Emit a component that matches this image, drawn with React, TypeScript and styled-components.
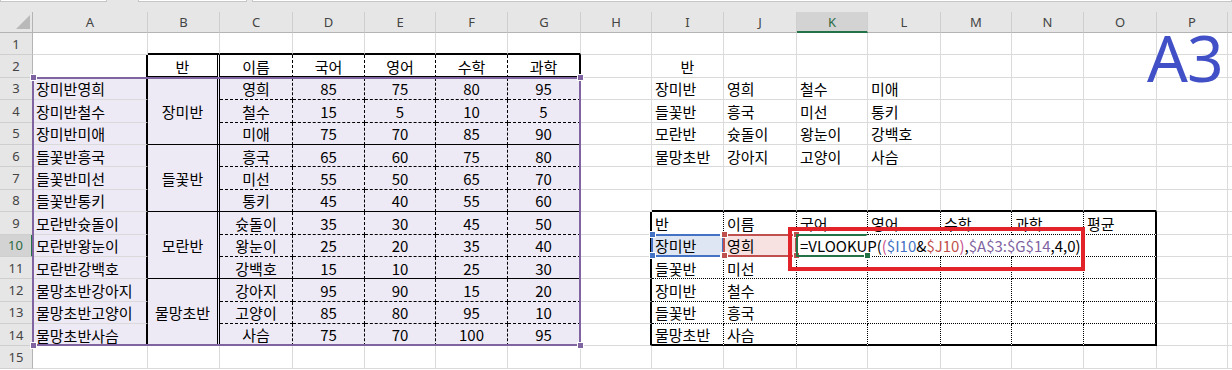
import React from 'react';
import styled, { createGlobalStyle } from 'styled-components';

const GlobalStyle = createGlobalStyle`
  html, body {
    margin: 0;
    padding: 0;
    background: #fff;
  }
  body {
    font-family: "Noto Sans CJK KR", "Noto Sans", sans-serif;
  }
`;

const GRIDLINE = '1px solid #dadada';
const THICK = '2px solid #000';
const THIN = '1px solid #000';
const DASH = '1px dashed #000';
const DOT = '1px dotted #000';
const DOUBLE = '3px double #000';

const LAVENDER = '#eeeaf5';
const PURPLE = '#8064a2';
const BLUE = '#4472c4';
const RED = '#c0504d';
const PINK = '#c8508c';
const GREEN = '#217346';

const LETTERS = ['A', 'B', 'C', 'D', 'E', 'F', 'G', 'H', 'I', 'J', 'K', 'L', 'M', 'N', 'O', 'P', 'Q'];
const WIDTHS = [115, 72, 73, 72, 71, 72, 73, 71, 72, 73, 71, 73, 71, 72, 73, 71];

type Align = 'left' | 'center';
type Entry = { text: string | number; align: Align };

const scores: [string, string, number, number, number, number][] = [
  ['장미반', '영희', 85, 75, 80, 95],
  ['장미반', '철수', 15, 5, 10, 5],
  ['장미반', '미애', 75, 70, 85, 90],
  ['들꽃반', '흥국', 65, 60, 75, 80],
  ['들꽃반', '미선', 55, 50, 65, 70],
  ['들꽃반', '통키', 45, 40, 55, 60],
  ['모란반', '슛돌이', 35, 30, 45, 50],
  ['모란반', '왕눈이', 25, 20, 35, 40],
  ['모란반', '강백호', 15, 10, 25, 30],
  ['물망초반', '강아지', 95, 90, 15, 20],
  ['물망초반', '고양이', 85, 80, 95, 10],
  ['물망초반', '사슴', 75, 70, 100, 95],
];

const classes = [
  ['장미반', '영희', '철수', '미애'],
  ['들꽃반', '흥국', '미선', '통키'],
  ['모란반', '슛돌이', '왕눈이', '강백호'],
  ['물망초반', '강아지', '고양이', '사슴'],
];

const lookupRows = [
  ['장미반', '영희'],
  ['들꽃반', '미선'],
  ['장미반', '철수'],
  ['들꽃반', '흥국'],
  ['물망초반', '사슴'],
];

// sheet content keyed by "col,row" (col 1 = A)
const data: Record<string, Entry> = {};
const put = (c: number, r: number, text: string | number, align: Align = 'left') => {
  data[`${c},${r}`] = { text, align };
};

['반', '이름', '국어', '영어', '수학', '과학'].forEach((t, i) => put(2 + i, 2, t, 'center'));
scores.forEach(([cls, name, ...nums], i) => {
  const r = 3 + i;
  put(1, r, cls + name);
  put(3, r, name, 'center');
  nums.forEach((n, j) => put(4 + j, r, n, 'center'));
});

put(9, 2, '반', 'center');
classes.forEach((row, i) => row.forEach((t, j) => put(9 + j, 3 + i, t)));

['반', '이름', '국어', '영어', '수학', '과학', '평균'].forEach((t, i) => put(9 + i, 9, t));
lookupRows.forEach(([cls, name], i) => {
  put(9, 10 + i, cls);
  put(10, 10 + i, name);
});

function borders(c: number, r: number): [string, string] {
  let right = GRIDLINE;
  let bottom = GRIDLINE;

  // score table B2:G14
  if (r === 1 && c >= 2 && c <= 7) bottom = THICK;
  if (r >= 2 && r <= 14) {
    if (c === 1) right = THICK;
    if (c === 2) right = DOUBLE;
    if (c >= 3 && c <= 6) right = DASH;
    if (c === 7) right = THICK;
    if (c >= 2 && c <= 7) {
      if (r === 2 || r === 14) bottom = THICK;
      else if (r === 5 || r === 8 || r === 11) bottom = THIN;
      else if (c >= 3) bottom = DASH;
    }
  }

  // lookup table I9:O14
  if (r === 8 && c >= 9 && c <= 15) bottom = THICK;
  if (r >= 9 && r <= 14) {
    if (c === 8) right = THICK;
    if (c >= 9 && c <= 14) right = DOT;
    if (c === 15) right = THICK;
    if (c >= 9 && c <= 15) bottom = r === 14 ? THICK : DOT;
  }
  return [right, bottom];
}

function fill(c: number, r: number): string {
  if (r >= 3 && r <= 14 && c >= 1 && c <= 7) return LAVENDER;
  if (r === 10 && c === 9) return '#dfe6f3';
  if (r === 10 && c === 10) return '#f7e1e1';
  return '#fff';
}

const Window = styled.div`
  width: 1232px;
  height: 370px;
  overflow: hidden;
  display: flex;
  flex-direction: column;
  background: #e6e6e6;
`;

const TopStrip = styled.div`
  flex: none;
  height: 12px;
  display: flex;
  align-items: flex-start;
`;

const BarBox = styled.div<{ $width: number; $gap: number }>`
  width: ${p => (p.$width ? `${p.$width}px` : 'auto')};
  flex: ${p => (p.$width ? 'none' : '1')};
  margin-left: ${p => p.$gap}px;
  height: 1px;
  background: #fff;
  border: 1px solid #c6c6c6;
  border-top: none;
`;

const Sheet = styled.div`
  position: relative;
  flex: 1;
  display: grid;
  grid-template-columns: 33px ${WIDTHS.map(w => `${w}px`).join(' ')} 1fr;
  grid-template-rows: 21px repeat(15, 22.4px) 1fr;
  background: #fff;
  color: #000;
  font-size: 15px;
`;

const Corner = styled.div`
  grid-column: 1;
  grid-row: 1;
  display: flex;
  align-items: flex-end;
  justify-content: flex-end;
  padding: 0 2px 3px 0;
  background: #e6e6e6;
  border-right: 1px solid #b4b4b4;
  border-bottom: 1px solid #b4b4b4;

  &::after {
    content: '';
    width: 0;
    height: 0;
    border-left: 14px solid transparent;
    border-bottom: 14px solid #b9b9b9;
  }
`;

const HeadText = styled.div`
  display: flex;
  align-items: center;
  justify-content: center;
  overflow: hidden;
  font-family: "Noto Sans", "Open Sans", sans-serif;
  font-size: 13px;
`;

const ColHead = styled(HeadText)<{ $c: number; $sel?: boolean }>`
  grid-column: ${p => p.$c + 1};
  grid-row: 1;
  background: ${p => (p.$sel ? '#d3d3d3' : '#e6e6e6')};
  color: ${p => (p.$sel ? '#2b6a42' : '#444')};
  border-right: 1px solid #cfcfcf;
  border-bottom: ${p => (p.$sel ? `2px solid ${GREEN}` : '1px solid #b4b4b4')};
`;

const RowHead = styled(HeadText)<{ $r: number; $sel?: boolean }>`
  grid-column: 1;
  grid-row: ${p => p.$r + 1};
  background: ${p => (p.$sel ? '#d3d3d3' : '#e6e6e6')};
  color: ${p => (p.$sel ? '#2b6a42' : '#444')};
  border-bottom: 1px solid #cfcfcf;
  border-right: ${p => (p.$sel ? `2px solid ${GREEN}` : '1px solid #b4b4b4')};
`;

const Cell = styled.div<{
  $c: number;
  $r: number;
  $span?: number;
  $right: string;
  $bottom: string;
  $align: Align;
  $bg: string;
}>`
  grid-column: ${p => p.$c + 1};
  grid-row: ${p => `${p.$r + 1} / span ${p.$span ?? 1}`};
  display: flex;
  align-items: center;
  justify-content: ${p => (p.$align === 'center' ? 'center' : 'flex-start')};
  min-width: 0;
  padding: 1px 3px 0;
  white-space: nowrap;
  overflow: hidden;
  background: ${p => p.$bg};
  border-right: ${p => p.$right};
  border-bottom: ${p => p.$bottom};
`;

const RangeBox = styled.div<{ $cols: string; $rows: string; $color: string; $z?: number; $open?: boolean }>`
  grid-column: ${p => p.$cols};
  grid-row: ${p => p.$rows};
  position: relative;
  z-index: ${p => p.$z ?? 3};
  margin: -1px 0 0 -1px;
  border: 2px solid ${p => p.$color};
  border-right-color: ${p => (p.$open ? 'transparent' : p.$color)};
  pointer-events: none;
`;

const Handle = styled.span<{ $x: 'left' | 'right'; $y: 'top' | 'bottom'; $color: string }>`
  position: absolute;
  ${p => p.$x}: -4px;
  ${p => p.$y}: -4px;
  width: 5px;
  height: 5px;
  background: ${p => p.$color};
  border: 1px solid #fff;
  box-sizing: content-box;
  margin: -0.5px;
`;

const Editor = styled.div`
  grid-column: 12 / 16;
  grid-row: 11;
  position: relative;
  z-index: 2;
  margin-bottom: 1px;
  display: flex;
  align-items: center;
  padding: 1px 0 0 3px;
  background: #fff;
  white-space: nowrap;
`;

const Token = styled.span<{ $color: string }>`
  color: ${p => p.$color};
`;

const Callout = styled.div`
  position: absolute;
  left: 788px;
  top: 215px;
  width: 297px;
  height: 44px;
  box-sizing: border-box;
  border: 4px solid #e2232a;
  z-index: 5;
`;

const BigLabel = styled.div`
  position: absolute;
  left: 1147px;
  top: 22px;
  font-family: "Noto Sans", sans-serif;
  font-size: 64px;
  line-height: 48px;
  letter-spacing: -1px;
  color: #4150c7;
  z-index: 4;
`;

const corners: ['left' | 'right', 'top' | 'bottom'][] = [
  ['left', 'top'],
  ['right', 'top'],
  ['left', 'bottom'],
  ['right', 'bottom'],
];

const Ref = ({ cols, rows, color }: { cols: string; rows: string; color: string }) => (
  <RangeBox $cols={cols} $rows={rows} $color={color}>
    {corners.map(([x, y]) => (
      <Handle key={x + y} $x={x} $y={y} $color={color} />
    ))}
  </RangeBox>
);

const App = () => {
  const cells: React.ReactNode[] = [];
  for (let r = 1; r <= 15; r++) {
    for (let c = 1; c <= 17; c++) {
      if (c === 2 && r >= 3 && r <= 14) {
        if ((r - 3) % 3 !== 0) continue;
        const [right, bottom] = borders(c, r + 2);
        cells.push(
          <Cell key={`${c},${r}`} $c={c} $r={r} $span={3} $right={right} $bottom={bottom} $align="center" $bg={LAVENDER}>
            {classes[(r - 3) / 3][0]}
          </Cell>
        );
        continue;
      }
      const [right, bottom] = borders(c, r);
      const entry = data[`${c},${r}`];
      cells.push(
        <Cell key={`${c},${r}`} $c={c} $r={r} $right={right} $bottom={bottom} $align={entry?.align ?? 'left'} $bg={fill(c, r)}>
          {entry?.text}
        </Cell>
      );
    }
  }

  return (
    <Window>
      <GlobalStyle />
      <TopStrip>
        <BarBox $width={105} $gap={0} />
        <BarBox $width={107} $gap={31} />
        <BarBox $width={0} $gap={5} />
      </TopStrip>
      <Sheet>
        <Corner />
        {LETTERS.map((l, i) => (
          <ColHead key={l} $c={i + 1} $sel={l === 'K'}>
            {l === 'Q' ? '' : l}
          </ColHead>
        ))}
        {Array.from({ length: 15 }, (_, i) => (
          <RowHead key={i} $r={i + 1} $sel={i + 1 === 10}>
            {i + 1}
          </RowHead>
        ))}
        {cells}

        <Ref cols="2 / 9" rows="4 / 16" color={PURPLE} />
        <Ref cols="10 / 11" rows="11 / 12" color={BLUE} />
        <Ref cols="11 / 12" rows="11 / 12" color={RED} />

        <Editor>
          =VLOOKUP(<Token $color={PINK}>(</Token>
          <Token $color={BLUE}>$I10</Token>&amp;<Token $color={RED}>$J10</Token>
          <Token $color={PINK}>)</Token>,<Token $color={PURPLE}>$A$3:$G$14</Token>,4,0)
        </Editor>
        <RangeBox $cols="12 / 13" $rows="11 / 12" $color={GREEN} $z={4} $open>
          <Handle $x="right" $y="bottom" $color={GREEN} />
        </RangeBox>

        <Callout />
        <BigLabel>A3</BigLabel>
      </Sheet>
    </Window>
  );
};

export default App;
